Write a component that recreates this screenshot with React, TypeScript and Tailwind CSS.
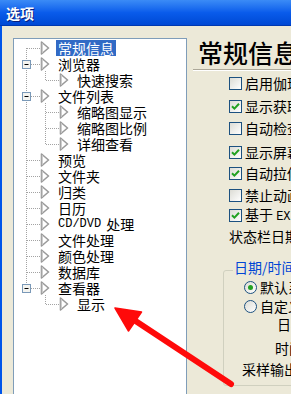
import React from "react";

const FONT = { fontFamily: '"Noto Sans CJK SC", "Noto Sans", sans-serif' };
const MONO = { fontFamily: '"Liberation Mono", "DejaVu Sans Mono", monospace' };

type Item = { label: React.ReactNode; level: 1 | 2; selected?: boolean };

const items: Item[] = [
  { label: "常规信息", level: 1, selected: true },
  { label: "浏览器", level: 1 },
  { label: "快速搜索", level: 2 },
  { label: "文件列表", level: 1 },
  { label: "缩略图显示", level: 2 },
  { label: "缩略图比例", level: 2 },
  { label: "详细查看", level: 2 },
  { label: "预览", level: 1 },
  { label: "文件夹", level: 1 },
  { label: "归类", level: 1 },
  { label: "日历", level: 1 },
  {
    label: (
      <>
        <span style={MONO} className="text-[12px] mr-[5px]">CD/DVD</span>处理
      </>
    ),
    level: 1,
  },
  { label: "文件处理", level: 1 },
  { label: "颜色处理", level: 1 },
  { label: "数据库", level: 1 },
  { label: "查看器", level: 1 },
  { label: "显示", level: 2 },
];

function TreeArrow() {
  return (
    <svg width="10" height="14" viewBox="0 0 10 14" className="shrink-0">
      <polygon points="1.5,1 8.5,7 1.5,13" fill="#ffffff" stroke="#9a9a9a" strokeWidth="1.6" strokeLinejoin="round" />
      <line x1="2.3" y1="2" x2="2.3" y2="12" stroke="#c8c8c8" strokeWidth="1" />
    </svg>
  );
}

function TreeLines() {
  const c = (i: number) => 9 + 16 * i;
  const level1 = [0, 1, 3, 7, 8, 9, 10, 11, 12, 13, 14, 15];
  const boxes = [1, 3, 15];
  const children: [number, number[]][] = [
    [1, [2]],
    [3, [4, 5, 6]],
    [15, [16]],
  ];
  return (
    <svg className="absolute left-0 top-0 pointer-events-none" width="172" height="300">
      <g stroke="#a3a3a3" strokeWidth="1" strokeDasharray="1 1">
        <line x1="12.5" y1={c(0)} x2="12.5" y2={c(15)} />
        {level1.map((i) => (
          <line key={i} x1="13" y1={c(i) + 0.5} x2="26" y2={c(i) + 0.5} />
        ))}
        {children.map(([p, ks]) => (
          <g key={p}>
            <line x1="31.5" y1={c(p) + 7} x2="31.5" y2={c(ks[ks.length - 1])} />
            {ks.map((k) => (
              <line key={k} x1="32" y1={c(k) + 0.5} x2="45" y2={c(k) + 0.5} />
            ))}
          </g>
        ))}
      </g>
      {boxes.map((i) => (
        <g key={i}>
          <rect x="8.5" y={c(i) - 3.5} width="8" height="8" fill="#f4f4f0" stroke="#7a99b8" strokeWidth="1" />
          <line x1="10.5" y1={c(i) + 0.5} x2="14.5" y2={c(i) + 0.5} stroke="#000" strokeWidth="1" />
        </g>
      ))}
    </svg>
  );
}

function Check({ checked }: { checked?: boolean }) {
  return (
    <span className="w-[13px] h-[13px] shrink-0 border border-[#1C5180] bg-gradient-to-br from-[#DCDCD5] to-[#FFFFFF] flex items-center justify-center">
      {checked && (
        <svg width="9" height="9" viewBox="0 0 9 9">
          <path d="M1 4.2 L3.4 6.6 L8 1.8" fill="none" stroke="#21A121" strokeWidth="2" />
        </svg>
      )}
    </span>
  );
}

function Radio({ checked }: { checked?: boolean }) {
  return (
    <span className="w-[13px] h-[13px] shrink-0 rounded-full border border-[#1C5180] bg-gradient-to-br from-[#DCDCD5] to-[#FFFFFF] flex items-center justify-center">
      {checked && <span className="w-[5px] h-[5px] rounded-full bg-[#21A121]" />}
    </span>
  );
}

const checkRows: { text: React.ReactNode; checked?: boolean; mt: string; box?: boolean }[] = [
  { text: "启用伽玛校正", checked: false, mt: "mt-[4px]", box: true },
  { text: "显示获取焦点", checked: true, mt: "mt-[7px]", box: true },
  { text: "自动检查更新", checked: false, mt: "mt-[6px]", box: true },
  { text: "显示屏幕信息", checked: true, mt: "mt-[8px]", box: true },
  { text: "自动拉伸图像", checked: true, mt: "mt-[5px]", box: true },
  { text: "禁止动画效果", checked: false, mt: "mt-[6px]", box: true },
  {
    text: (
      <>
        基于 <span style={MONO} className="text-[12px]">EXIF</span> 旋转图像
      </>
    ),
    checked: true,
    mt: "mt-[4px]",
    box: true,
  },
  { text: "状态栏日期格式", mt: "mt-[5px]", box: false },
];

export default function App() {
  return (
    <div style={FONT} className="relative w-[291px] h-[394px] overflow-hidden bg-[#ECE9D8] flex flex-col">
      {/* Title bar */}
      <div className="h-[26px] shrink-0 flex items-center pl-[6px] bg-gradient-to-b from-[#3B8BF6] via-[#0A5CEB] to-[#0048D4] border-b border-[#0038B0]">
        <span className="text-white font-bold text-[14px] leading-none [text-shadow:1px_1px_0_#0A1E7A]">选项</span>
      </div>

      {/* Body */}
      <div className="flex-1 flex border-l-[2px] border-[#0055EA] pl-[11px] pt-[12px] min-h-0">
        {/* Tree */}
        <div className="relative w-[174px] h-[400px] shrink-0 border border-[#7F9DB9] bg-white pt-[1px]">
          <TreeLines />
          {items.map((it, i) => (
            <div
              key={i}
              className={`h-[16px] flex items-center ${it.level === 1 ? "pl-[26px]" : "pl-[45px]"}`}
            >
              <TreeArrow />
              <span
                className={`ml-[6px] px-[2px] h-[16px] flex items-center text-[14px] leading-[16px] whitespace-nowrap ${
                  it.selected ? "bg-[#316AC5] text-white" : "text-black"
                }`}
              >
                {it.label}
              </span>
            </div>
          ))}
        </div>

        {/* Right panel */}
        <div className="flex-1 min-w-0 pl-[6px] flex flex-col">
          <div className="ml-[5px] h-[28px] text-[25px] leading-[28px] font-medium text-black whitespace-nowrap">
            常规信息
          </div>
          <div className="mt-[3px] h-[1px] bg-[#ACA899]" />
          <div className="h-[1px] bg-white" />

          <div className="pl-[36px] flex flex-col">
            {checkRows.map((r, i) => (
              <div key={i} className={`${r.mt} h-[16px] flex items-center whitespace-nowrap`}>
                {r.box && <Check checked={r.checked} />}
                <span className={`${r.box ? "ml-[3px]" : ""} text-[14px] leading-[16px] text-black`}>{r.text}</span>
              </div>
            ))}
          </div>

          {/* Group box */}
          <div className="relative ml-[30px] mt-[26px] h-[116px] -mr-[8px] border border-[#D0D0BF] rounded-[3px]">
            <span className="absolute -top-[12px] left-[9px] bg-[#ECE9D8] px-[1px] text-[14px] leading-[16px] text-[#0046D5] whitespace-nowrap">
              日期/时间输出格式
            </span>
            <div className="pl-[20px] pt-[8px] flex flex-col">
              <div className="h-[16px] flex items-center whitespace-nowrap">
                <Radio checked />
                <span className="ml-[3px] text-[14px] leading-[16px]">默认系统格式</span>
              </div>
              <div className="mt-[3px] h-[16px] flex items-center whitespace-nowrap">
                <Radio />
                <span className="ml-[3px] text-[14px] leading-[16px]">自定义格式</span>
              </div>
            </div>
            <div className="pl-[53px] mt-[2px] h-[16px] text-[14px] leading-[16px] whitespace-nowrap">日期格式</div>
            <div className="pl-[51px] mt-[8px] h-[16px] text-[14px] leading-[16px] whitespace-nowrap">时间格式</div>
            <div className="pl-[18px] mt-[5px] h-[16px] text-[14px] leading-[16px] whitespace-nowrap">采样输出</div>
          </div>
        </div>
      </div>

      {/* Red annotation arrow */}
      <svg className="absolute left-0 top-0 pointer-events-none" width="291" height="394" viewBox="0 0 291 394">
        <line x1="231" y1="384" x2="128" y2="316" stroke="#FF0A0A" strokeWidth="6" strokeLinecap="round" />
        <polygon points="115,308 141.5,312 128.5,331" fill="#FF0A0A" stroke="#FF0A0A" strokeWidth="1.5" strokeLinejoin="round" />
      </svg>
    </div>
  );
}
